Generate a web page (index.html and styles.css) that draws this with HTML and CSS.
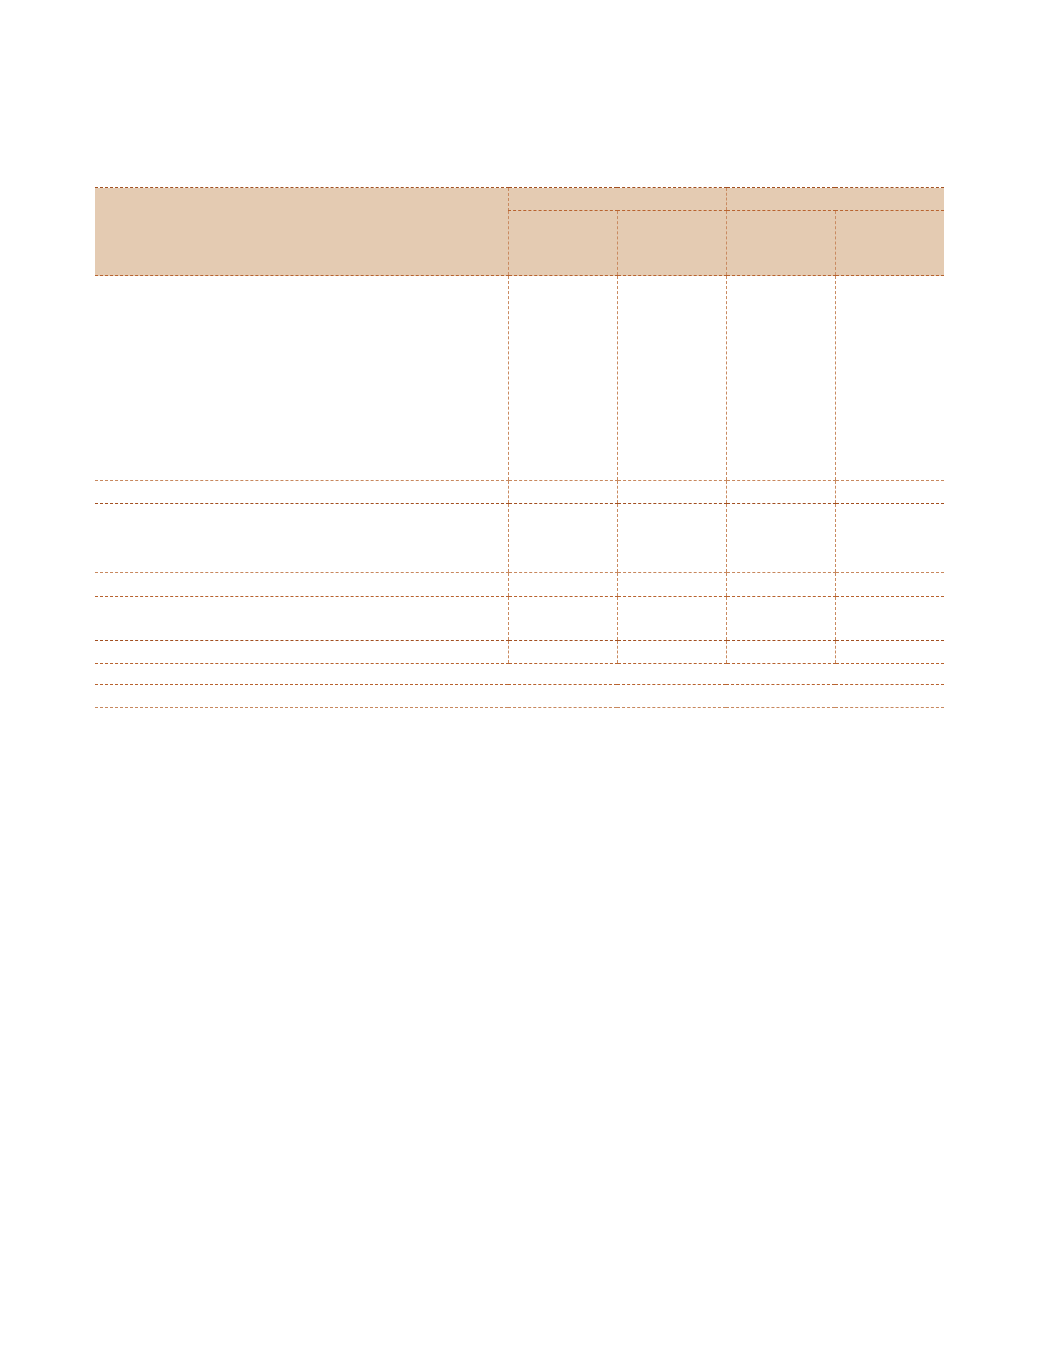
FILE: index.html
```html
<!DOCTYPE html>
<html lang="en">
<head>
<meta charset="utf-8">
<title>Table</title>
<link rel="stylesheet" href="styles.css">
</head>
<body>
<div class="page">
  <table class="grid">
    <colgroup>
      <col class="c-label">
      <col class="c-num">
      <col class="c-num">
      <col class="c-num">
      <col class="c-num">
    </colgroup>
    <thead>
      <tr class="h1">
        <th class="head first dark-top" rowspan="2"></th>
        <th class="head group dark-top" colspan="2"></th>
        <th class="head group dark-top" colspan="2"></th>
      </tr>
      <tr class="h2">
        <th class="head sub"></th>
        <th class="head sub"></th>
        <th class="head sub"></th>
        <th class="head sub"></th>
      </tr>
    </thead>
    <tbody>
      <tr class="r1 light"><td></td><td></td><td></td><td></td><td></td></tr>
      <tr class="r2 dark"><td></td><td></td><td></td><td></td><td></td></tr>
      <tr class="r3 light"><td></td><td></td><td></td><td></td><td></td></tr>
      <tr class="r4"><td></td><td></td><td></td><td></td><td></td></tr>
      <tr class="r5 dark"><td></td><td></td><td></td><td></td><td></td></tr>
      <tr class="r6"><td></td><td></td><td></td><td></td><td></td></tr>
      <tr class="r7"><td colspan="5"></td></tr>
      <tr class="r8 light"><td colspan="5"></td></tr>
    </tbody>
  </table>
</div>
</body>
</html>
```

FILE: styles.css
```css
html, body {
  margin: 0;
  padding: 0;
  background: #ffffff;
  font-family: "Liberation Sans", Arial, sans-serif;
}

.page {
  padding: 187px 0 0 95px;
}

.grid {
  border-collapse: collapse;
  width: 849px;
  table-layout: fixed;
}

.c-label { width: 413px; }
.c-num { width: 109px; }

.grid th,
.grid td {
  padding: 0;
  border-bottom: 1px dashed #b8632f;
}

.grid td + td,
.grid th.group,
.grid th.sub {
  border-left: 1px dashed #c98a60;
}

.head {
  background: #e4cbb2;
}

.dark-top {
  border-top: 1px dashed #a24f20;
}

.h1 { height: 23px; }
.h2 { height: 65px; }

.r1 { height: 205px; }
.r2 { height: 23px; }
.r3 { height: 69px; }
.r4 { height: 24px; }
.r5 { height: 44px; }
.r6 { height: 23px; }
.r7 { height: 21px; }
.r8 { height: 23px; }

.light td { border-bottom-color: #c8885e; }
.dark td { border-bottom-color: #a24f20; }
```
